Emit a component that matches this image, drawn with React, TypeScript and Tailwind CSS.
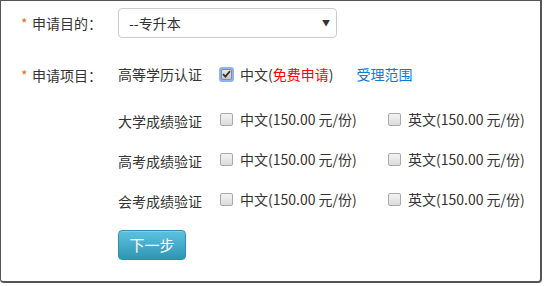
const rows = [
  { title: "大学成绩验证" },
  { title: "高考成绩验证" },
  { title: "会考成绩验证" },
];

function Box({ checked }: { checked?: boolean }) {
  if (checked) {
    return (
      <span className="flex h-[15px] w-[15px] items-center justify-center rounded-[3px] bg-[#8db4f0]">
        <span className="flex h-[11px] w-[11px] items-center justify-center rounded-[2px] border border-[#8a8a8a] bg-gradient-to-b from-[#e8e8e8] to-[#c8c8c8]">
          <svg width="9" height="8" viewBox="0 0 9 8">
            <path d="M1 4.2 L3.4 6.6 L8 1.2" fill="none" stroke="#333" strokeWidth="1.8" />
          </svg>
        </span>
      </span>
    );
  }
  return (
    <span className="block h-[13px] w-[13px] rounded-[2px] border border-[#a9a9a9] bg-gradient-to-b from-[#f4f4f4] to-[#dcdcdc]" />
  );
}

function Label({ text }: { text: string }) {
  return (
    <div className="flex w-[97px] shrink-0 items-center">
      <span className="w-[11px] text-[14px] text-[#e4702a]">*</span>
      <span>{text}</span>
    </div>
  );
}

export default function App() {
  return (
    <div
      className="h-[283px] w-[542px] rounded-b-[4px] border-t border-l border-r-2 border-b-2 border-[#555] bg-white pl-[20px] pt-[7px] text-[14px] text-[#333]"
      style={{ fontFamily: '"Microsoft YaHei", "Noto Sans CJK SC", sans-serif' }}
    >
      {/* 申请目的 */}
      <div className="flex h-[30px] items-center">
        <Label text="申请目的：" />
        <div className="flex h-[30px] w-[219px] items-center justify-between rounded-[4px] border border-[#ccc] pl-[10px] pr-[6px]">
          <span>--专升本</span>
          <span className="text-[8px] text-[#333]">▼</span>
        </div>
      </div>

      {/* 申请项目 */}
      <div className="mt-[26px] flex">
        <div className="flex h-[20px] items-center pt-[3px]">
          <Label text="申请项目：" />
        </div>
        <div className="flex flex-col">
          <div className="flex h-[20px] items-center">
            <span className="w-[101px] pt-[1px]">高等学历认证</span>
            <Box checked />
            <span className="ml-[6px]">
              中文(<span className="text-[#f00]">免费申请</span>)
            </span>
            <span className="ml-[23px] text-[#0a7cd1]">受理范围</span>
          </div>

          {rows.map((r, i) => (
            <div
              key={r.title}
              className={
                "flex h-[20px] items-center " +
                (i === 0 ? "mt-[25px]" : "mt-[20px]")
              }
            >
              <span className="w-[102px] pt-[4px]">{r.title}</span>
              <div className="flex w-[168px] items-center">
                <Box />
                <span className="ml-[7px]">中文(150.00 元/份)</span>
              </div>
              <div className="flex items-center">
                <Box />
                <span className="ml-[7px]">英文(150.00 元/份)</span>
              </div>
            </div>
          ))}

          <button className="mt-[21px] flex h-[30px] w-[68px] items-center justify-center rounded-[4px] border border-[#2f8fae] bg-gradient-to-b from-[#5bc3e0] to-[#2f95b3] text-[15px] text-white shadow-[inset_0_1px_0_rgba(255,255,255,0.2)]">
            下一步
          </button>
        </div>
      </div>
    </div>
  );
}
